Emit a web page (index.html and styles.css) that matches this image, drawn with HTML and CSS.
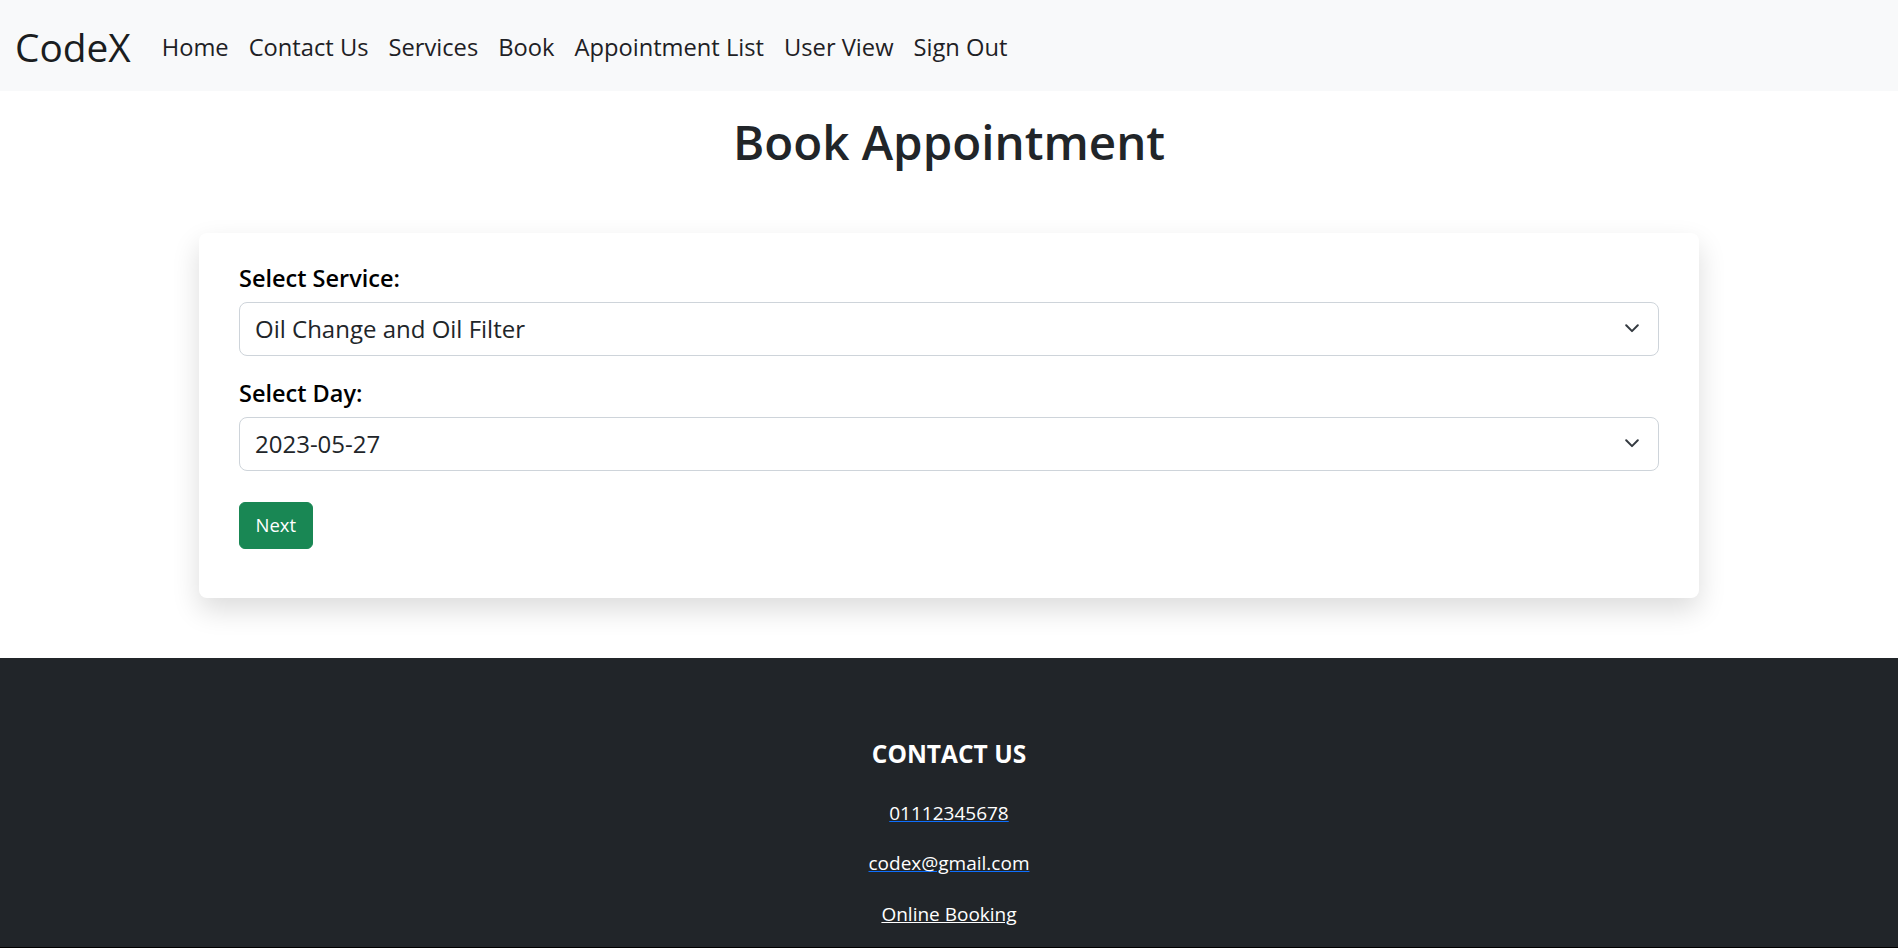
FILE: index.html
```html
<!DOCTYPE html>
<html lang="en">
<head>
<meta charset="utf-8">
<title>Book Appointment</title>
<link rel="stylesheet" href="styles.css">
</head>
<body>
<nav class="navbar">
  <a class="brand" href="#">CodeX</a>
  <ul class="nav-links">
    <li><a href="#">Home</a></li>
    <li><a href="#">Contact Us</a></li>
    <li><a href="#">Services</a></li>
    <li><a href="#">Book</a></li>
    <li><a href="#">Appointment List</a></li>
    <li><a href="#">User View</a></li>
    <li><a href="#">Sign Out</a></li>
  </ul>
</nav>
<main class="page">
  <h1 class="title">Book Appointment</h1>
  <form class="card">
    <div class="field">
      <label class="label">Select Service:</label>
      <div class="select">
        <span>Oil Change and Oil Filter</span>
        <svg class="chev" width="14" height="9" viewBox="0 0 14 9"><path d="M1.2 1.3 7 7.1l5.8-5.8" fill="none" stroke="#343a40" stroke-width="2" stroke-linecap="round" stroke-linejoin="round"/></svg>
      </div>
    </div>
    <div class="field">
      <label class="label">Select Day:</label>
      <div class="select">
        <span>2023-05-27</span>
        <svg class="chev" width="14" height="9" viewBox="0 0 14 9"><path d="M1.2 1.3 7 7.1l5.8-5.8" fill="none" stroke="#343a40" stroke-width="2" stroke-linecap="round" stroke-linejoin="round"/></svg>
      </div>
    </div>
    <button class="btn" type="button">Next</button>
  </form>
</main>
<footer class="footer">
  <h2 class="footer-title">CONTACT US</h2>
  <p class="fline"><a class="flink blue" href="#">01112345678</a></p>
  <p class="fline"><a class="flink blue" href="#">codex@gmail.com</a></p>
  <p class="fline"><a class="flink" href="#">Online Booking</a></p>
</footer>
</body>
</html>
```
FILE: styles.css
```css
* { box-sizing: border-box; }
html, body { margin: 0; padding: 0; }
body {
  font-family: "Segoe UI", "Open Sans", "Noto Sans", sans-serif;
  color: #212529;
  background: #fff;
}
a { text-decoration: none; }

.navbar {
  height: 91px;
  background: #f8f9fa;
  display: flex;
  align-items: center;
  padding-left: 15px;
  padding-top: 6px;
}
.brand {
  font-size: 38.8px;
  color: #1a1d20;
  margin-right: 31px;
  line-height: 1;
  padding-bottom: 2px;
}
.nav-links {
  list-style: none;
  margin: 0;
  padding: 0;
  display: flex;
  gap: 20px;
}
.nav-links a {
  font-size: 23.7px;
  color: #1e2125;
  line-height: 1;
}

.page { padding-bottom: 60px; }
.title {
  margin: 22px 0 0;
  text-align: center;
  font-size: 47.5px;
  font-weight: 600;
  line-height: 1.2;
  color: #212529;
}
.card {
  width: 1500px;
  margin: 62.5px auto 0;
  background: #fff;
  border-radius: 8px;
  box-shadow: 0 12px 28px rgba(0,0,0,0.14);
  padding: 28px 40px 49px;
}
.field { margin-bottom: 20px; }
.label {
  display: block;
  font-size: 23.5px;
  font-weight: 600;
  line-height: 34px;
  color: #000;
  margin-bottom: 7px;
}
.select {
  height: 54px;
  border: 1px solid #ced4da;
  border-radius: 8px;
  display: flex;
  align-items: center;
  justify-content: space-between;
  padding: 0 19px 0 15px;
  font-size: 24px;
  color: #212529;
}
.chev { display: block; }
.btn {
  margin-top: 11px;
  font-family: inherit;
  font-size: 18.5px;
  line-height: 28px;
  padding: 8.5px 15.5px;
  border: 1px solid #198754;
  background: #198754;
  color: #fff;
  border-radius: 6px;
}

.footer {
  background: #212529;
  text-align: center;
  padding: 81px 0 19px;
  border-bottom: 1px solid #000;
}
.footer-title {
  margin: 0 0 31px;
  font-size: 24.5px;
  font-weight: 700;
  line-height: 1.2;
  color: #fff;
}
.fline {
  margin: 0 0 22px;
  font-size: 19px;
  line-height: 1.5;
}
.fline:last-child { margin-bottom: 0; }
.flink {
  color: #fff;
  text-decoration: underline;
  text-decoration-color: #fff;
}
.flink.blue { text-decoration-color: #0d6efd; }
```
